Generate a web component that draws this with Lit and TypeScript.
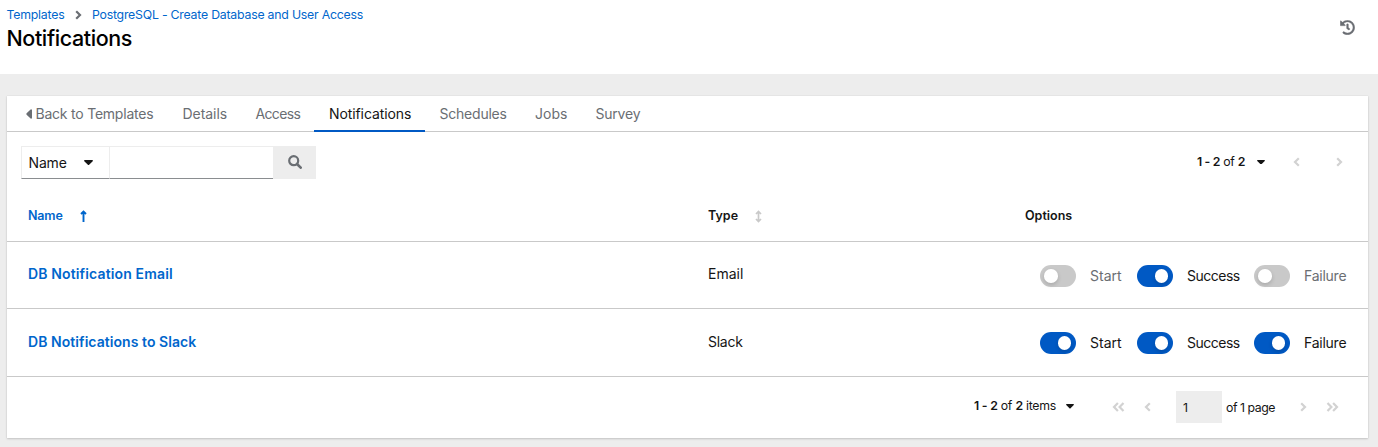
import { LitElement, html, css, svg } from "lit";
import { customElement, property } from "lit/decorators.js";
import { classMap } from "lit/directives/class-map.js";

const chevron = (color: string, flip = false) => html`<svg class="chev" width="7" height="10" viewBox="0 0 7 10">
  <path d=${flip ? "M5.800 1.200L2 5l3.800 3.800" : "M1.200 1.200L5 5 1.200 8.800"} fill="none" stroke=${color} stroke-width="2.2"/></svg>`;
const double = (flip = false) => html`<svg class="chev" width="13" height="10" viewBox="0 0 13 10">
  ${flip
    ? svg`<path d="M5.900 1L2 5l3.900 4M11.500 1L7.600 5l3.900 4" fill="none" stroke="#d2d2d2" stroke-width="2.2"/>`
    : svg`<path d="M1.500 1l3.900 4-3.900 4M7.100 1L11 5 7.100 9" fill="none" stroke="#d2d2d2" stroke-width="2.2"/>`}</svg>`;
const caret = (w: number) => html`<svg class="chev" width=${w} height=${w * 0.55} viewBox="0 0 10 5.5">
  <path d="M.9 0h8.200c.8 0 1.100.8.6 1.300L5.700 5.200c-.4.4-1 .4-1.400 0L.3 1.300C-.2.8.1 0 .9 0z" fill="#151515"/></svg>`;

@customElement("option-switch")
export class OptionSwitch extends LitElement {
  @property() label = "";
  @property({ type: Boolean }) on = false;

  static styles = css`
    :host { display: flex; align-items: center; height: 22px; }
    .track { box-sizing: border-box; width: 36px; height: 22px; border-radius: 11px; background: #c9c9c9; padding: 4px; display: flex; flex: none; }
    .knob { width: 13.500px; height: 13.500px; border-radius: 50%; background: #fff; box-shadow: 0 2px 4px rgba(3, 3, 3, 0.16); }
    .track.on .knob { margin-left: auto; margin-right: 0.600px; }
    .track.on { background: #0059c4; }
    .label { margin-left: 14px; color: #6a6e73; white-space: nowrap; }
    .label.on { color: #151515; }
    .success { letter-spacing: -0.500px; }
    .failure { letter-spacing: -0.25px; }
  `;

  render() {
    const state = { on: this.on };
    return html`<span class=${classMap({ track: true, ...state })}><span class="knob"></span></span>
      <span class=${classMap({ label: true, success: this.label === "Success", failure: this.label === "Failure", ...state })}>${this.label}</span>`;
  }
}

@customElement("app-root")
export class AppRoot extends LitElement {
  static styles = css`
    :host { display: block; height: 447px; overflow: hidden; background: #ededed; color: #151515; font: 14px/20px Inter, "Open Sans", sans-serif; }
    * { box-sizing: border-box; }
    .chev { display: block; flex: none; }
    .header { height: 74px; background: #fff; padding: 5px 23.500px 0 6.500px; display: flex; justify-content: space-between; }
    .crumbs { display: flex; align-items: center; height: 20px; font-size: 12.300px; color: #06c; white-space: nowrap; letter-spacing: -0.22px; }
    .crumbs .chev { margin: 0 10px 0 10.500px; }
    .title { margin: -1px 0 0 0; font-size: 21.500px; line-height: 28px; font-weight: 500; color: #000; letter-spacing: -0.400px; }
    .history { margin-top: 15px; }
    .card { margin: 22px 10px 0 7px; height: 342px; background: #fff; box-shadow: 0 1px 2px rgba(3, 3, 3, 0.16), 0 0 1px rgba(3, 3, 3, 0.12); }
    .tabs { height: 36px; border-bottom: 1px solid #c9c9c9; display: flex; color: #6a6e73; white-space: nowrap; letter-spacing: -0.220px; }
    .tab { height: 36px; padding: 8px 0 0 14.500px; }
    .back { width: 161px; padding-left: 18.500px; display: flex; gap: 4px; }
    .back svg { margin-top: 5px; }
    .details { width: 73px; letter-spacing: -0.05px; }
    .access { width: 73px; letter-spacing: -0.65px; }
    .active { width: 111px; color: #151515; border-bottom: 2px solid #0059c4; letter-spacing: -0.1px; padding-left: 15px; }
    .schedules { width: 95px; }
    .jobs { width: 61px; letter-spacing: 0; padding-left: 15px; }
    .toolbar { height: 59px; padding: 14px 25px 0 14px; display: flex; justify-content: space-between; }
    .search { display: flex; height: 33px; }
    .field { display: flex; align-items: center; width: 88px; padding: 0 16.500px 0 6.500px; justify-content: space-between; border: solid #ededed; border-width: 1px 0 1px 1px; border-bottom-color: #8a8d90; letter-spacing: -0.150px; }
    .query { width: 164px; border: solid #ededed; border-width: 1px 0 1px 1px; border-bottom-color: #8a8d90; }
    .go { width: 43px; background: #ededed; display: grid; place-items: center; padding-bottom: 1px; }
    .pager { display: flex; align-items: center; font-size: 12.300px; white-space: nowrap; letter-spacing: -0.320px; }
    .top { height: 32px; }
    .top .caret { margin: 0 28px 0 12px; }
    .top .prev { margin-right: 36px; }
    b { font-weight: 600; }
    .row { display: grid; grid-template-columns: 680px 317px 1fr; padding-left: 21px; border-bottom: 1px solid #c9c9c9; align-items: center; }
    .head { height: 51px; font-size: 12.500px; font-weight: 600; }
    .sort { display: flex; align-items: center; gap: 17px; }
    .sorted { color: #06c; gap: 17.500px; letter-spacing: -0.150px; }
    .first { height: 67px; }
    .second { height: 68px; }
    .name, .type { padding-bottom: 2px; }
    .name { color: #06c; font-weight: 600; letter-spacing: 0.140px; }
    .second .name { letter-spacing: 0.060px; }
    .second .type { letter-spacing: -0.250px; }
    .switches { display: grid; grid-template-columns: 97px 117px auto; padding: 2px 0 0 15px; }
    .second .switches { padding-top: 1px; }
    .bottom { height: 60px; padding-right: 29.500px; justify-content: flex-end; }
    .count { padding-bottom: 2px; letter-spacing: -0.260px; }
    .bottom .caret { margin: 0 38.500px 0 9.500px; padding-bottom: 1px; }
    .gap { width: 19px; }
    .page { width: 46px; height: 32px; background: #ededed; padding: 7px 7px 5px; margin: 0 4px 0 25px; }
    .of { width: 49px; margin-right: 24.500px; padding-top: 2px; letter-spacing: -0.450px; }
  `;

  private row(cls: string, name: string, type: string, states: boolean[]) {
    const labels = ["Start", "Success", "Failure"];
    return html`<div class="row ${cls}"><span class="name">${name}</span><span class="type">${type}</span>
      <div class="switches">${labels.map((l, i) => html`<option-switch .label=${l} .on=${states[i]}></option-switch>`)}</div></div>`;
  }

  render() {
    return html`
      <header class="header">
        <div>
          <nav class="crumbs"><span>Templates</span>${chevron("#6a6e73")}<span>PostgreSQL - Create Database and User Access</span></nav>
          <div class="title">Notifications</div>
        </div>
        <svg class="history" width="15" height="15" viewBox="0 0 512 512"><path fill="#6a6e73" stroke="#6a6e73" stroke-width="8" d="M504 255.531c.253 136.640-111.180 248.372-247.820 248.468-59.015.042-113.223-20.530-155.822-54.911-11.077-8.940-11.905-25.541-1.839-35.607l11.267-11.267c8.609-8.609 22.353-9.551 31.891-1.984C173.062 425.135 212.781 440 256 440c101.705 0 184-82.311 184-184 0-101.705-82.311-184-184-184-48.814 0-93.149 18.969-126.068 49.932l50.754 50.754c10.080 10.080 2.941 27.314-11.313 27.314H24c-8.837 0-16-7.163-16-16V38.627c0-14.254 17.234-21.393 27.314-11.314l49.372 49.372C129.209 34.136 189.552 8 256 8c136.810 0 247.747 110.780 248 247.531zm-180.912 78.784l9.823-12.630c8.138-10.463 6.253-25.542-4.210-33.679L288 256.349V152c0-13.255-10.745-24-24-24h-16c-13.255 0-24 10.745-24 24v135.651l65.409 50.874c10.463 8.137 25.541 6.253 33.679-4.210z"/></svg>
      </header>
      <main class="card">
        <nav class="tabs">
          <div class="tab back"><svg width="6" height="10" viewBox="0 0 6 10"><path d="M6 1.200v7.600c0 .8-.9 1.200-1.400.6L.6 5.700c-.4-.4-.4-1 0-1.400l4-3.700C5.100.1 6 .4 6 1.200z" fill="#6a6e73"/></svg><span>Back to Templates</span></div>
          <div class="tab details">Details</div><div class="tab access">Access</div><div class="tab active">Notifications</div>
          <div class="tab schedules">Schedules</div><div class="tab jobs">Jobs</div><div class="tab">Survey</div>
        </nav>
        <div class="toolbar">
          <div class="search">
            <div class="field"><span>Name</span>${caret(9)}</div><div class="query"></div>
            <div class="go"><svg width="14" height="14" viewBox="0 0 14 14"><circle cx="5.700" cy="5.700" r="4.500" fill="none" stroke="#6a6e73" stroke-width="2.200"/><path d="M9 9l3.700 3.700" stroke="#6a6e73" stroke-width="2.600" stroke-linecap="round"/></svg></div>
          </div>
          <div class="pager top"><span><b>1 - 2</b> of <b>2</b></span><span class="caret">${caret(8)}</span><span class="prev">${chevron("#d2d2d2", true)}</span>${chevron("#d2d2d2")}</div>
        </div>
        <div class="row head">
          <span class="sort sorted">Name<svg width="7" height="12" viewBox="0 0 7 12"><path d="M3.500 12V1.500M1 4l2.500-2.500L6 4" fill="none" stroke="#06c" stroke-width="1.900"/></svg></span>
          <span class="sort">Type<svg width="7" height="13" viewBox="0 0 7 13"><path d="M3.500 1.500v10M1 4l2.500-2.500L6 4M1 9l2.500 2.500L6 9" fill="none" stroke="#c9c9c9" stroke-width="1.700"/></svg></span>
          <span>Options</span>
        </div>
        ${this.row("first", "DB Notification Email", "Email", [false, true, false])}
        ${this.row("second", "DB Notifications to Slack", "Slack", [true, true, true])}
        <div class="pager bottom"><span class="count"><b>1 - 2</b> of <b>2</b> items</span><span class="caret">${caret(8)}</span>${double(true)}<span class="gap"></span>${chevron("#d2d2d2", true)}<span class="page">1</span><span class="of">of 1 page</span>${chevron("#d2d2d2")}<span class="gap"></span>${double()}</div>
      </main>`;
  }
}
